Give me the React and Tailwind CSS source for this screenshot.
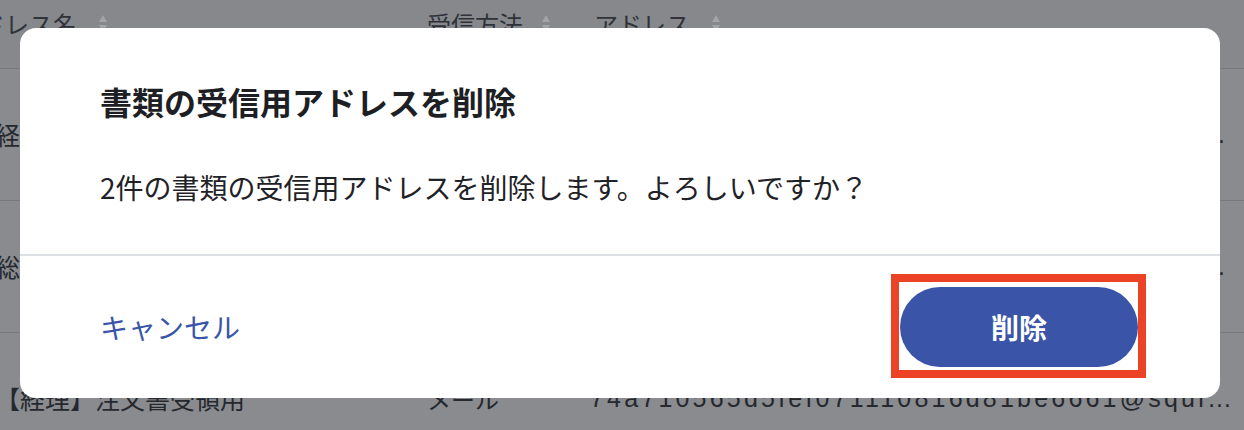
import React from "react";

const font = { fontFamily: '"Noto Sans CJK JP", "Noto Sans", "Liberation Sans", sans-serif' };

function SortIcon() {
  return (
    <svg width="10" height="20" viewBox="0 0 10 20" className="shrink-0">
      <path d="M5 1 L9 8 L1 8 Z" fill="#a3a4a8" />
      <path d="M1 11 L9 11 L5 18 Z" fill="#a3a4a8" />
    </svg>
  );
}

const rows = [
  { name: "経理部_請求書受領用", method: "メール", addr: "1c9e4f0a72b3d85e6f10a2c4b7d9e3f1@squickinc.example.jp" },
  { name: "総務部_契約書受領用", method: "メール", addr: "b83f2a1d6c4e9f0571a8d3c2e6b4f917@squickinc.example.jp" },
  { name: "【経理】注文書受領用", method: "メール", addr: "74a710565d5fef071110816d81be6661@squickinc.example.jp" },
];

export default function App() {
  return (
    <div className="relative w-[1244px] h-[430px] overflow-hidden bg-[#8a8b8f]" style={font}>
      {/* dimmed table behind the dialog */}
      <div className="flex flex-col text-[24px] text-[#2f3238]">
        <div className="flex items-start h-[69px] pt-[6px] border-b border-[#78797d] bg-[#87888c]">
          <div className="flex items-center gap-[21px] w-[470px] ml-[-43px] shrink-0 leading-[36px]">
            <span>アドレス名</span>
            <SortIcon />
          </div>
          <div className="flex items-center gap-[18px] w-[163px] shrink-0 leading-[36px]">
            <span>受信方法</span>
            <SortIcon />
          </div>
          <div className="flex items-center gap-[21px] leading-[36px] pl-[4px]">
            <span>アドレス</span>
            <SortIcon />
          </div>
        </div>
        {rows.map((r) => (
          <div key={r.addr} className="flex items-center h-[132px] border-b border-[#78797d] text-[#25282d]">
            <div className="w-[432px] ml-[-5px] shrink-0 truncate text-[25px]">{r.name}</div>
            <div className="w-[163px] shrink-0">{r.method}</div>
            <div
              className="w-[642px] shrink-0 truncate text-[25px] tracking-[3.2px]"
              style={{ fontFamily: '"Liberation Sans", Arial, sans-serif' }}
            >
              {r.addr}
            </div>
          </div>
        ))}
      </div>

      {/* dialog */}
      <div className="absolute left-[20px] top-[28px] w-[1200px] h-[370px] bg-white rounded-[16px] flex flex-col">
        <div className="px-[80px] pt-[49px] pb-[46px]">
          <h2 className="text-[32px] font-bold leading-[48px] text-[#1d1f24]">書類の受信用アドレスを削除</h2>
          <p className="mt-[41px] text-[28px] leading-[42px] text-[#1f2227]">
            2件の書類の受信用アドレスを削除します。よろしいですか？
          </p>
        </div>
        <div className="h-[2px] bg-[#dcdfe4]" />
        <div className="flex-1 flex items-center justify-between pl-[80px] pr-[82px]">
          <button className="text-[28px] leading-[42px] text-[#3a55a8]">キャンセル</button>
          <div className="relative">
            <button className="w-[238px] h-[80px] rounded-full bg-[#3a55a8] text-white text-[28px] font-bold flex items-center justify-center">
              削除
            </button>
            <span className="pointer-events-none absolute left-[-9px] right-[-8px] top-[-13px] bottom-[-11px] border-[8px] border-[#ec4226]" />
          </div>
        </div>
      </div>
    </div>
  );
}
